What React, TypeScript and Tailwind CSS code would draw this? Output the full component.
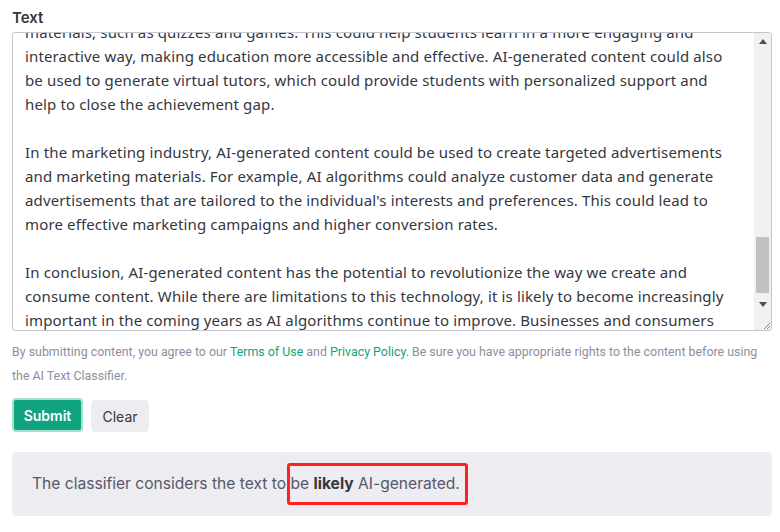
import React from "react";

const lines = [
  "materials, such as quizzes and games. This could help students learn in a more engaging and",
  "interactive way, making education more accessible and effective. AI-generated content could also",
  "be used to generate virtual tutors, which could provide students with personalized support and",
  "help to close the achievement gap.",
  "",
  "In the marketing industry, AI-generated content could be used to create targeted advertisements",
  "and marketing materials. For example, AI algorithms could analyze customer data and generate",
  "advertisements that are tailored to the individual's interests and preferences. This could lead to",
  "more effective marketing campaigns and higher conversion rates.",
  "",
  "In conclusion, AI-generated content has the potential to revolutionize the way we create and",
  "consume content. While there are limitations to this technology, it is likely to become increasingly",
  "important in the coming years as AI algorithms continue to improve. Businesses and consumers",
];

export default function App() {
  return (
    <div className="w-[780px] h-[532px] bg-white pl-3 pr-2 overflow-hidden">
      <div className="mt-[8px] mb-[4px] h-[20px] leading-[20px] text-[15px] font-semibold text-[#353740] font-['Inter',sans-serif]">
        Text
      </div>

      <div className="h-[299px] border border-[#c5c5d2] rounded-[3px] flex overflow-hidden">
        <div className="flex-1 overflow-hidden pl-[12px] font-['Noto_Sans',sans-serif] text-[15px] tracking-[0.14px] text-[#353740]">
          <div className="mt-[-13px]">
            {lines.map((l, i) => (
              <div key={i} className="h-[24px] leading-[24px] whitespace-nowrap">
                {l}
              </div>
            ))}
          </div>
        </div>
        <div className="w-[17px] bg-[#f1f1f1] flex flex-col">
          <div className="h-[17px] flex items-center justify-center">
            <svg width="8" height="5" viewBox="0 0 8 5">
              <path d="M0 5 L4 0 L8 5 Z" fill="#505050" />
            </svg>
          </div>
          <div className="flex-1 pt-[187px] px-[2px]">
            <div className="h-[56px] bg-[#c1c1c1]" />
          </div>
          <div className="h-[17px] flex items-center justify-center">
            <svg width="8" height="5" viewBox="0 0 8 5">
              <path d="M0 0 L8 0 L4 5 Z" fill="#505050" />
            </svg>
          </div>
          <div className="h-[17px] flex items-end justify-end bg-[#f1f1f1]">
            <svg width="10" height="10" viewBox="0 0 10 10">
              <path d="M9 3 L3 9 M9 6 L6 9" stroke="#8a8a8a" strokeWidth="1" />
            </svg>
          </div>
        </div>
      </div>

      <div className="mt-[9px] font-['Roboto',sans-serif] text-[12.4px] leading-[24px] text-[#8e8ea0]">
        <div className="whitespace-nowrap">
          By submitting content, you agree to our{" "}
          <span className="text-[#10a37f]">Terms of Use</span> and{" "}
          <span className="text-[#10a37f]">Privacy Policy</span>. Be sure you have appropriate rights to the content before using
        </div>
        <div className="whitespace-nowrap">the AI Text Classifier.</div>
      </div>

      <div className="mt-[10px] flex gap-[8px] font-['Inter',sans-serif] text-[14px]">
        <button className="h-[34px] w-[71px] rounded-[4px] border-[2px] border-[#a8dfcf] bg-[#10a37f] text-white font-semibold">
          Submit
        </button>
        <button className="h-[32px] mt-[2px] w-[58px] rounded-[4px] bg-[#ececf1] text-[#353740]">
          Clear
        </button>
      </div>

      <div className="relative mt-[20px] h-[64px] rounded-[4px] bg-[#ececf1] pl-[20px] flex items-center font-['Inter',sans-serif] text-[15.6px] text-[#565869]">
        <span>
          The classifier considers the text to be <span className="font-bold text-[#353740]">likely</span> AI-generated.
        </span>
        <div className="absolute left-[275px] top-[11px] w-[181px] h-[42px] border-[3px] border-[#ff2020] rounded-[3px]" />
      </div>
    </div>
  );
}
